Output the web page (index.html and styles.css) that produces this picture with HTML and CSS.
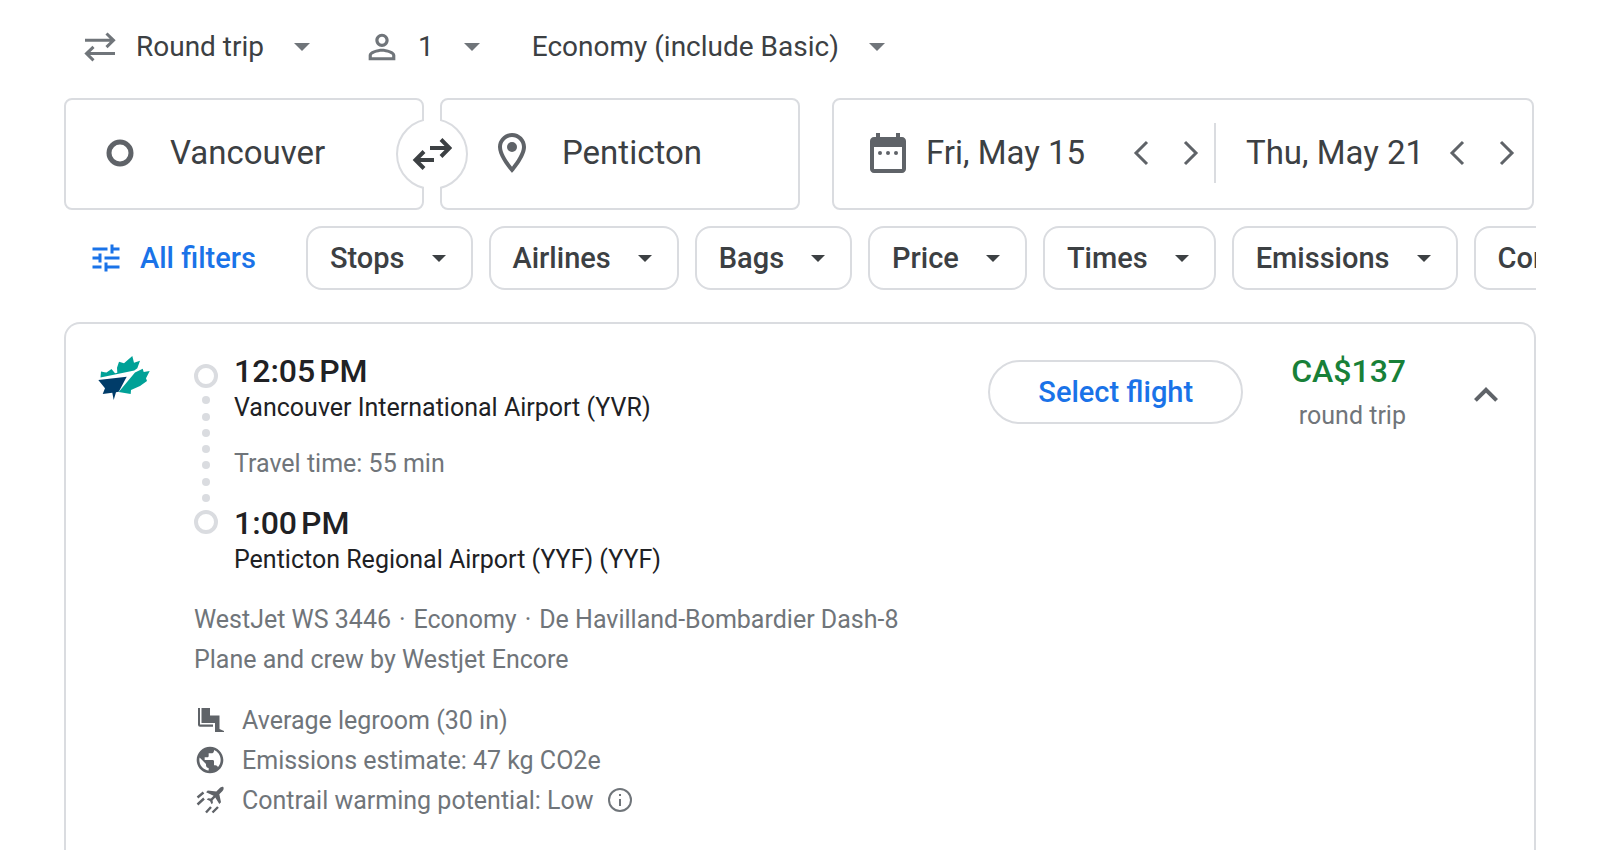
FILE: index.html
```html
<!DOCTYPE html>
<html lang="en">
<head>
    <meta charset="UTF-8">
    <meta name="viewport" content="width=device-width, initial-scale=1.0">
    <title>Vancouver to Penticton | Flights</title>
    <link rel="stylesheet" href="styles.css">
</head>
<body>

<div class="page">
    <!-- Trip options -->
    <div class="trip-options">
        <label class="option">
            <svg class="trip-icon" viewBox="0 0 32 32" aria-hidden="true"><path d="M1 9.3h28M22.5 2.5l7 6.8-7 6.8M31 22.6H3M9.5 15.8l-7 6.8 7 6.8"/></svg>
            <select class="option-select" aria-label="Ticket type">
                <option selected>Round trip</option>
                <option>One way</option>
                <option>Multi-city</option>
            </select>
            <svg class="caret" viewBox="0 0 16 8" aria-hidden="true"><path d="M0 0h16L8 8z"/></svg>
        </label>
        <label class="option">
            <svg class="person-icon" viewBox="0 0 24 24" aria-hidden="true"><path d="M12 5.9c1.16 0 2.1.94 2.1 2.1s-.94 2.1-2.1 2.1S9.9 9.16 9.9 8s.94-2.1 2.1-2.1m0 9c2.97 0 6.1 1.46 6.1 2.1v1.1H5.9V17c0-.64 3.13-2.1 6.1-2.1M12 4C9.79 4 8 5.79 8 8s1.79 4 4 4 4-1.79 4-4-1.79-4-4-4zm0 9c-2.67 0-8 1.34-8 4v3h16v-3c0-2.66-5.33-4-8-4z"/></svg>
            <select class="option-select" aria-label="Passengers">
                <option selected>1</option>
                <option>2</option>
                <option>3</option>
            </select>
            <svg class="caret" viewBox="0 0 16 8" aria-hidden="true"><path d="M0 0h16L8 8z"/></svg>
        </label>
        <label class="option">
            <select class="option-select" aria-label="Cabin class">
                <option selected>Economy (include Basic)</option>
                <option>Premium economy</option>
                <option>Business</option>
                <option>First</option>
            </select>
            <svg class="caret" viewBox="0 0 16 8" aria-hidden="true"><path d="M0 0h16L8 8z"/></svg>
        </label>
    </div>

    <!-- Search fields -->
    <div class="search">
        <div class="places">
            <label class="field">
                <svg class="field-icon" viewBox="0 0 48 48" aria-hidden="true"><circle cx="24" cy="24" r="11" fill="none" stroke="currentColor" stroke-width="5"/></svg>
                <input class="place-input" type="text" value="Vancouver" aria-label="Where from?">
            </label>
            <button class="swap" aria-label="Swap origin and destination">
                <svg viewBox="0 0 40 40" aria-hidden="true"><path d="M18 14h19M29 5.5l8.5 8.5-8.5 8.5M22 26H3M12 17.5L3.5 26l8.5 8.5"/></svg>
            </button>
            <label class="field">
                <svg class="field-icon" viewBox="0 0 24 24" aria-hidden="true"><path d="M12 2C8.13 2 5 5.13 5 9c0 5.25 7 13 7 13s7-7.75 7-13c0-3.87-3.13-7-7-7zM7 9c0-2.76 2.24-5 5-5s5 2.24 5 5c0 2.88-2.88 7.19-5 9.88C9.92 16.21 7 11.85 7 9z"/><circle cx="12" cy="9" r="2.5"/></svg>
                <input class="place-input" type="text" value="Penticton" aria-label="Where to?">
            </label>
        </div>
        <div class="dates">
            <div class="date">
                <svg class="date-icon" viewBox="0 0 24 24" aria-hidden="true"><path d="M19 4h-1V2h-2v2H8V2H6v2H5c-1.11 0-2 .9-2 2v14c0 1.1.89 2 2 2h14c1.1 0 2-.9 2-2V6c0-1.1-.9-2-2-2zm0 16H5V9h14v11z"/><circle cx="8" cy="12" r="1"/><circle cx="12" cy="12" r="1"/><circle cx="16" cy="12" r="1"/></svg>
                <input class="date-input" type="text" value="Fri, May 15" aria-label="Departure">
                <button class="step" aria-label="Previous day"><svg viewBox="0 0 48 48" aria-hidden="true"><path d="M29 13L18 24l11 11"/></svg></button>
                <button class="step" aria-label="Next day"><svg viewBox="0 0 48 48" aria-hidden="true"><path d="M19 13l11 11-11 11"/></svg></button>
            </div>
            <div class="date return">
                <input class="date-input" type="text" value="Thu, May 21" aria-label="Return">
                <button class="step" aria-label="Previous day"><svg viewBox="0 0 48 48" aria-hidden="true"><path d="M29 13L18 24l11 11"/></svg></button>
                <button class="step" aria-label="Next day"><svg viewBox="0 0 48 48" aria-hidden="true"><path d="M19 13l11 11-11 11"/></svg></button>
            </div>
        </div>
    </div>

    <!-- Filters -->
    <div class="filters">
        <button class="all-filters">
            <svg viewBox="0 0 24 24" aria-hidden="true"><path d="M3 17v2h6v-2H3zM3 5v2h10V5H3zm10 16v-2h8v-2h-8v-2h-2v6h2zM7 9v2H3v2h4v2h2V9H7zm14 4v-2H11v2h10zm-6-4h2V7h4V5h-4V3h-2v6z"/></svg>
            All filters
        </button>
        <button class="chip">Stops <svg viewBox="0 0 14 7" aria-hidden="true"><path d="M0 0h14L7 7z"/></svg></button>
        <button class="chip">Airlines <svg viewBox="0 0 14 7" aria-hidden="true"><path d="M0 0h14L7 7z"/></svg></button>
        <button class="chip">Bags <svg viewBox="0 0 14 7" aria-hidden="true"><path d="M0 0h14L7 7z"/></svg></button>
        <button class="chip">Price <svg viewBox="0 0 14 7" aria-hidden="true"><path d="M0 0h14L7 7z"/></svg></button>
        <button class="chip">Times <svg viewBox="0 0 14 7" aria-hidden="true"><path d="M0 0h14L7 7z"/></svg></button>
        <button class="chip">Emissions <svg viewBox="0 0 14 7" aria-hidden="true"><path d="M0 0h14L7 7z"/></svg></button>
        <button class="chip">Connecting airports <svg viewBox="0 0 14 7" aria-hidden="true"><path d="M0 0h14L7 7z"/></svg></button>
    </div>

    <!-- Flight details -->
    <div class="flight">
        <svg class="airline-logo" viewBox="0 0 52 44" role="img" aria-label="WestJet">
            <path fill="#00a197" d="M2.5 21.5L3 15.5l3.5.8 2 .2 5-3.5 3.5 4.3 2.3-.6-.3-5 2-6 5 1.5L34.300 0 36 6.700l6-2-2.700 7.600-3 2.200z"/>
            <path fill="#00a197" d="M37 16.500l7.700-3.800 1 3.300 6-1-3.700 7.300 1 2.700-7 5-9 4-.3 4-12-2z"/>
            <path fill="#003c69" d="M.3 24l28.400-3.300-8 15-2.700.6-2.300 7.700-1.400-7.300L4.700 38 7 32.300z"/>
        </svg>
        <div class="details">
            <div class="journey">
                <div class="timeline" aria-hidden="true">
                    <span class="ring"></span>
                    <span class="dot"></span>
                    <span class="dot"></span>
                    <span class="dot"></span>
                    <span class="dot"></span>
                    <span class="dot"></span>
                    <span class="dot"></span>
                    <span class="dot"></span>
                    <span class="ring"></span>
                </div>
                <div class="stops">
                    <div class="time">12:05&#8239;PM</div>
                    <div class="airport">Vancouver International Airport (YVR)</div>
                    <div class="duration">Travel time: 55 min</div>
                    <div class="time">1:00&#8239;PM</div>
                    <div class="airport">Penticton Regional Airport (YYF) (YYF)</div>
                </div>
            </div>
            <div class="aircraft">
                <div>WestJet WS 3446<span class="separator">·</span>Economy<span class="separator">·</span>De Havilland-Bombardier Dash-8</div>
                <div>Plane and crew by Westjet Encore</div>
            </div>
            <ul class="amenities">
                <li>
                    <svg viewBox="0 0 32 32" aria-hidden="true"><path d="M7.500 4H16v7.500h9.500V25l4.500 2v1h-9v-9H7.500zM4 4h2v16.500h13v2.200H6a2 2 0 0 1-2-2z"/></svg>
                    Average legroom (30 in)
                </li>
                <li>
                    <svg viewBox="0 0 24 24" aria-hidden="true"><path d="M12 2C6.48 2 2 6.48 2 12s4.48 10 10 10 10-4.48 10-10S17.52 2 12 2zm-1 17.93c-3.95-.49-7-3.85-7-7.93 0-.62.08-1.21.21-1.79L9 15v1c0 1.1.9 2 2 2v1.93zm6.9-2.54c-.26-.81-1-1.39-1.9-1.39h-1v-3c0-.55-.45-1-1-1H8v-2h2c.55 0 1-.45 1-1V7h2c1.1 0 2-.9 2-2v-.41c2.93 1.19 5 4.06 5 7.41 0 2.08-.8 3.97-2.1 5.39z"/></svg>
                    Emissions estimate: 47 kg CO2e
                </li>
                <li>
                    <svg viewBox="0 0 32 32" aria-hidden="true"><path d="M29.3 3c.8 1.5.2 3-1 4.3l-3 3 1.7 8-1.7 1.7-4-6.5-2.7 2.7.3 2.8-1.300 1.300-1.600-3.200-3.200-1.600 1.300-1.300 2.800.3 2.700-2.700-7.500-3.500 1.700-1.700 8.500 1 3-3c1.300-1.200 2.500-2.200 4-1.600z"/><path fill="none" stroke="currentColor" stroke-width="2.4" d="M3.500 13.500l6-5M3.500 20.500l6.500-6M12 28.500l5-5.500M18.500 28.500l5.500-5.500"/></svg>
                    Contrail warming potential: Low
                    <button class="info" aria-label="About contrail warming"><svg viewBox="0 0 28 28" aria-hidden="true"><circle cx="14" cy="14" r="11" fill="none" stroke="currentColor" stroke-width="2"/><path d="M13 13h2v7h-2zM13 8h2v2h-2z"/></svg></button>
                </li>
            </ul>
        </div>
        <button class="select-flight">Select flight</button>
        <div class="price">
            <div class="amount">CA$137</div>
            <div class="fare-type">round trip</div>
        </div>
        <button class="collapse" aria-label="Hide flight details">
            <svg viewBox="0 0 24 24" aria-hidden="true"><path d="M12 8l-6 6 1.41 1.41L12 10.83l4.59 4.58L18 14z"/></svg>
        </button>
    </div>
</div>

</body>
</html>
```
FILE: styles.css
```css
/* General styling */
* {
    box-sizing: border-box;
}

body {
    margin: 0;
    background-color: #fff;
    color: #3c4043;
    font-family: Roboto, Arial, sans-serif;
    font-size: 25px;
}

button, input, select {
    font-family: inherit;
    color: inherit;
    background: none;
    border: none;
    padding: 0;
    margin: 0;
}

button {
    cursor: pointer;
}

svg {
    display: block;
    flex: none;
    fill: currentColor;
}

.page {
    padding: 0 64px;
}

/* Trip options */
.trip-options {
    display: flex;
    align-items: center;
    gap: 52px;
    height: 94px;
    padding-left: 20px;
}

.option {
    display: flex;
    align-items: center;
    color: #70757a;
}

.option-select {
    appearance: none;
    field-sizing: content;
    font-size: 28px;
    line-height: 36px;
    color: #3c4043;
    margin-right: 30px;
}

.trip-icon {
    width: 32px;
    height: 32px;
    margin-right: 20px;
}

.trip-icon, .swap svg, .step svg {
    fill: none;
    stroke: currentColor;
    stroke-width: 3;
}

.person-icon {
    width: 40px;
    height: 40px;
    margin-right: 16px;
}

.caret {
    width: 16px;
    height: 8px;
}

/* Search fields */
.search {
    display: grid;
    grid-template-columns: 736fr 702fr;
    gap: 32px;
    margin: 4px 2px 16px 0;
}

.places {
    display: grid;
    grid-template-columns: 1fr 1fr;
    gap: 16px;
    position: relative;
}

.field {
    display: flex;
    align-items: center;
    height: 112px;
    min-width: 0;
    padding: 0 0 2px 30px;
    border: 2px solid #dadce0;
    border-radius: 8px;
    color: #5f6368;
}

.swap + .field {
    padding-left: 46px;
}

.field-icon {
    width: 48px;
    height: 48px;
    margin-right: 26px;
}

.place-input, .date-input {
    flex: 1;
    width: 0;
    font-size: 33px;
    line-height: 40px;
    color: #3c4043;
}

.swap {
    position: absolute;
    top: 50%;
    left: 50%;
    transform: translate(-50%, -50%);
    display: flex;
    align-items: center;
    justify-content: center;
    width: 72px;
    height: 72px;
    background-color: #fff;
    border: 2px solid #dadce0;
    border-radius: 50%;
}

/* hides the circle outline in the gap between the two fields */
.swap::before {
    content: "";
    position: absolute;
    top: -2px;
    bottom: -2px;
    left: 50%;
    width: 16px;
    margin-left: -8px;
    background-color: #fff;
}

.swap svg {
    position: relative;
    width: 40px;
    height: 40px;
    stroke-width: 4;
}

.dates {
    display: grid;
    grid-template-columns: 380fr 318fr;
    align-items: center;
    height: 112px;
    padding-bottom: 2px;
    border: 2px solid #dadce0;
    border-radius: 8px;
}

.date {
    display: flex;
    align-items: center;
    height: 60px;
    min-width: 0;
    padding-left: 30px;
    color: #5f6368;
}

.return {
    padding-right: 2px;
    border-left: 2px solid #dadce0;
}

.date-icon {
    width: 48px;
    height: 48px;
    margin-right: 14px;
}

.step svg {
    width: 48px;
    height: 48px;
}

/* Filters */
.filters {
    display: flex;
    gap: 16px;
    overflow: hidden;
}

.all-filters, .chip {
    flex: none;
    display: flex;
    align-items: center;
    height: 64px;
    font-size: 29px;
    font-weight: 500;
}

.all-filters {
    gap: 16px;
    padding: 0 34px 0 24px;
    color: #1a73e8;
}

.all-filters svg {
    width: 36px;
    height: 36px;
}

.chip {
    gap: 27px;
    padding: 0 25px 0 22px;
    border: 2px solid #dadce0;
    border-radius: 16px;
}

.chip svg {
    width: 14px;
    height: 7px;
}

/* Flight details */
.flight {
    display: flex;
    align-items: flex-start;
    margin-top: 32px;
    padding: 27px 24px 40px 32px;
    border: 2px solid #dadce0;
    border-bottom: none;
    border-radius: 16px 16px 0 0;
    color: #70757a;
}

.airline-logo {
    width: 52px;
    height: 44px;
    margin: 5px 44px 0 0;
}

.details {
    flex: 1;
}

.journey {
    display: flex;
    gap: 16px;
}

.timeline {
    display: flex;
    flex-direction: column;
    align-items: center;
    justify-content: space-between;
    padding: 13px 0 42px;
}

.ring {
    width: 24px;
    height: 24px;
    border: 4px solid #dadce0;
    border-radius: 50%;
}

.dot {
    width: 8px;
    height: 8px;
    background-color: #dadce0;
    border-radius: 50%;
}

.time {
    font-size: 32px;
    font-weight: 500;
    line-height: 41px;
    color: #202124;
}

.airport {
    line-height: 32px;
    color: #202124;
}

.duration {
    line-height: 32px;
    margin: 24px 0 23px;
}

.aircraft {
    line-height: 40px;
    margin: 24px 0 20px;
}

.separator {
    margin: 0 8px;
}

.amenities {
    list-style: none;
    margin: 0;
    padding: 0;
}

.amenities li {
    display: flex;
    align-items: center;
    height: 40px;
}

.amenities li > svg {
    width: 32px;
    height: 32px;
    margin-right: 16px;
    color: #5f6368;
}

.info {
    margin-left: 12px;
    color: #70757a;
}

.info svg {
    width: 28px;
    height: 28px;
}

.select-flight {
    height: 64px;
    margin: 9px 48px 0 0;
    padding: 0 48px;
    border: 2px solid #dadce0;
    border-radius: 32px;
    font-size: 29px;
    font-weight: 500;
    color: #1a73e8;
}

.price {
    min-width: 112px;
    text-align: right;
}

.amount {
    font-size: 32px;
    font-weight: 500;
    line-height: 41px;
    color: #188038;
}

.fare-type {
    line-height: 32px;
    margin-top: 8px;
}

.collapse {
    margin: 20px 0 0 56px;
    color: #5f6368;
}

.collapse svg {
    width: 48px;
    height: 48px;
}
```
